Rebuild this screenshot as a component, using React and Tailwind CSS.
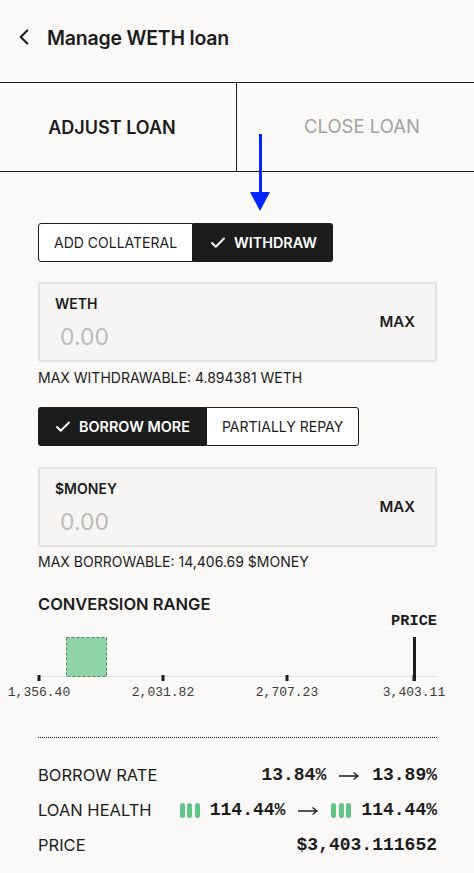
import React from "react";
import { ChevronLeft, Check } from "lucide-react";

const sans = "font-['Inter','Noto_Sans',sans-serif]";
const mono = "font-['Liberation_Mono','DejaVu_Sans_Mono',monospace]";

const Toggle = ({ left, right, active }) => (
  <div className="flex h-[39px]">
    {[left, right].map((label, i) => {
      const on = active === i;
      const round = i === 0 ? "rounded-l-[3px]" : "rounded-r-[3px]";
      return (
        <button
          key={label}
          className={`flex items-center gap-[7px] ${round} ${
            on
              ? "bg-[#1c1c1c] px-[16px] text-[14.4px] text-white font-semibold"
              : "bg-white px-[15px] text-[14px] border border-[#1c1c1c] text-[#1c1c1c]"
          }`}
        >
          {on && <Check size={18} strokeWidth={2.5} />}
          {label}
        </button>
      );
    })}
  </div>
);

const AmountBox = ({ token }) => (
  <div className="flex h-[80px] justify-between rounded-[2px] border-2 border-[#e4e2df] bg-[#f6f5f3] pl-[15px] pr-[20px]">
    <div className="flex flex-col pt-[11px]">
      <span className="text-[14px] leading-[18px] font-semibold text-[#1c1c1c]">{token}</span>
      <span className="mt-[13px] pl-[5px] text-[23px] leading-none text-[#bdbbb9]">0.00</span>
    </div>
    <span className="self-center text-[15px] font-semibold text-[#1c1c1c]">MAX</span>
  </div>
);

const HealthBars = () => (
  <span className="mr-[10px] inline-flex gap-[2.5px]">
    <span className="h-[15px] w-[5px] rounded-full bg-[#5ec487]" />
    <span className="h-[15px] w-[5px] rounded-full bg-[#5ec487]" />
    <span className="h-[15px] w-[5px] rounded-full bg-[#5ec487]" />
  </span>
);

const Row = ({ label, children }) => (
  <div className="flex h-[35px] items-center justify-between">
    <span className="text-[16.5px] text-[#1c1c1c]">{label}</span>
    <span className={`${mono} flex items-center text-[18px] font-bold text-[#1c1c1c]`}>{children}</span>
  </div>
);

const Arrow = () => (
  <svg width="20" height="10" viewBox="0 0 20 10" className="mx-[13px]">
    <path d="M0 5H19M14.5 1.5L19 5L14.5 8.5" fill="none" stroke="#1c1c1c" strokeWidth="1.3" />
  </svg>
);

const ticks = [
  { x: 39, label: "1,356.40" },
  { x: 163, label: "2,031.82" },
  { x: 287, label: "2,707.23" },
  { x: 414, label: "3,403.11" },
];

export default function App() {
  return (
    <div className={`${sans} relative min-h-[873px] w-full bg-[#faf9f7] text-[#1c1c1c]`}>
      <header className="flex h-[82px] items-start gap-[10px] pl-[11px] pt-[24px]">
        <ChevronLeft size={26} strokeWidth={2} />
        <h1 className="text-[19.5px] font-semibold tracking-[-0.2px]">Manage WETH loan</h1>
      </header>

      <div className="grid h-[90px] grid-cols-[237px_1fr] border-y border-[#1c1c1c]">
        <div className="flex items-center justify-center border-r border-[#1c1c1c] pr-[12px] text-[18px] font-semibold">
          ADJUST LOAN
        </div>
        <div className="flex items-center justify-center pl-[13px] text-[18.5px] text-[#a3a1a0]">
          CLOSE LOAN
        </div>
      </div>

      <main className="pl-[38px] pr-[37px]">
        <div className="pt-[51px]">
          <Toggle left="ADD COLLATERAL" right="WITHDRAW" active={1} />
        </div>
        <div className="mt-[20px]">
          <AmountBox token="WETH" />
        </div>
        <p className="mt-[7px] text-[14px] leading-[17px]">MAX WITHDRAWABLE: 4.894381 WETH</p>

        <div className="mt-[21px]">
          <Toggle left="BORROW MORE" right="PARTIALLY REPAY" active={0} />
        </div>
        <div className="mt-[21px]">
          <AmountBox token="$MONEY" />
        </div>
        <p className="mt-[6px] text-[14px] leading-[17px]">MAX BORROWABLE: 14,406.69 $MONEY</p>

        <h2 className="mt-[24px] text-[16.5px] font-semibold leading-[20px]">CONVERSION RANGE</h2>
      </main>

      <svg width="474" height="96" className="-mt-[4px] block">
        <text x="437" y="15" textAnchor="end" fontFamily="Liberation Mono, monospace" fontSize="15.3" fontWeight="700" fill="#1c1c1c">
          PRICE
        </text>
        <line x1="38" y1="66.5" x2="437" y2="66.5" stroke="#e2e3e6" strokeWidth="1" />
        <rect x="66.5" y="27.5" width="40" height="39" fill="#8fd3a6" stroke="#4a8a60" strokeDasharray="3 2" strokeWidth="1" />
        {ticks.map((t) => (
          <g key={t.x}>
            <rect x={t.x - 1.5} y="65" width="3" height="6" fill="#1c1c1c" />
            <text x={t.x} y="86" textAnchor="middle" fontFamily="Liberation Mono, monospace" fontSize="13" fill="#3a3a3a">
              {t.label}
            </text>
          </g>
        ))}
        <rect x="413" y="27" width="3" height="44" fill="#1c1c1c" />
      </svg>

      <div className="pl-[38px] pr-[37px]">
        <div className="mt-[31px] border-t border-dotted border-[#1c1c1c]" />
        <div className="mt-[20px]">
          <Row label="BORROW RATE">
            13.84%<Arrow />13.89%
          </Row>
          <Row label="LOAN HEALTH">
            <HealthBars />114.44%<Arrow /><HealthBars />114.44%
          </Row>
          <Row label="PRICE">$3,403.111652</Row>
        </div>
      </div>

      <div className="pointer-events-none absolute left-[250px] top-[134px] flex flex-col items-center">
        <div className="h-[58px] w-[3px] bg-[#0026ff]" />
        <div className="h-0 w-0 border-x-[10px] border-t-[19px] border-x-transparent border-t-[#0026ff]" />
      </div>
    </div>
  );
}
